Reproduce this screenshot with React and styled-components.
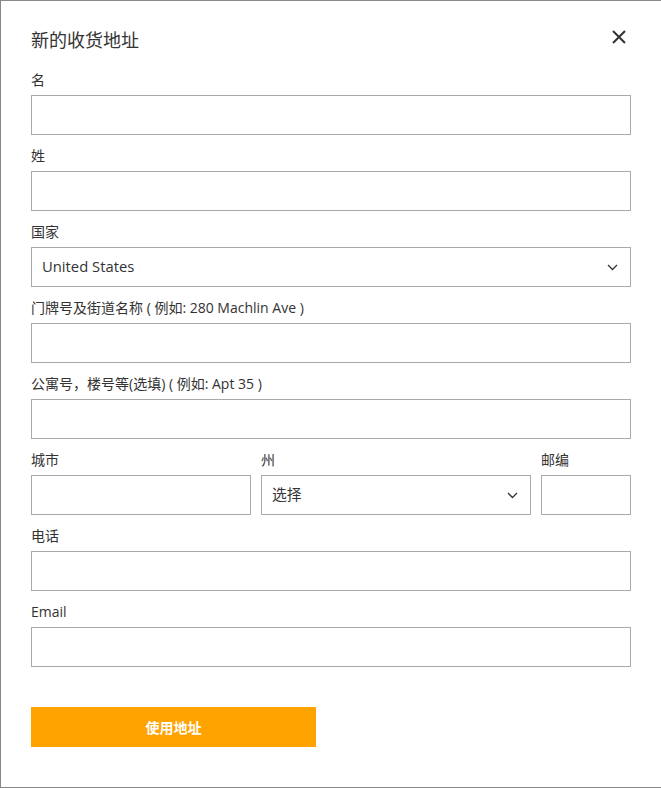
import styled, { createGlobalStyle } from "styled-components";

const GlobalStyle = createGlobalStyle`
  html, body {
    margin: 0;
    padding: 0;
    background: #fff;
  }
  body {
    font-family: "Open Sans", "Noto Sans CJK SC", sans-serif;
    color: #333;
  }
  * { box-sizing: border-box; }
`;

const Modal = styled.div`
  width: 661px;
  height: 788px;
  border: 1px solid #888;
  border-right: none;
  background: #fff;
  padding: 25px 30px 0 30px;
`;

const Header = styled.div`
  display: flex;
  align-items: flex-start;
  justify-content: space-between;
  height: 26px;
  margin-bottom: 18px;
`;

const Title = styled.h2`
  margin: 0;
  font-size: 18px;
  font-weight: 400;
  line-height: 26px;
  color: #333;
  font-family: "Noto Sans CJK SC", sans-serif;
`;

const CloseButton = styled.button`
  border: none;
  background: none;
  padding: 0;
  width: 14px;
  height: 14px;
  margin: 4px 5px 0 0;
  display: flex;
  cursor: pointer;
`;

const Field = styled.div`
  display: flex;
  flex-direction: column;
  margin-bottom: 11px;
  width: ${(p) => (p.$width ? `${p.$width}px` : "100%")};
`;

const Label = styled.label`
  font-size: 14px;
  line-height: 20px;
  height: 20px;
  margin-bottom: 5px;
  color: #333;
  white-space: nowrap;
`;

const Input = styled.input`
  height: 40px;
  width: 100%;
  border: 1px solid #aaa;
  background: #fff;
  padding: 0 10px;
  font-size: 14px;
  font-family: inherit;
  outline: none;
`;

const SelectBox = styled.div`
  height: 40px;
  width: 100%;
  border: 1px solid #aaa;
  background: #fff;
  padding: 0 12px 3px 10px;
  display: flex;
  align-items: center;
  justify-content: space-between;
  font-size: 14.8px;
  color: #333;

  svg {
    margin-top: 3px;
  }
`;

const Row = styled.div`
  display: flex;
  gap: 10px;
  width: 600px;
`;

const Form = styled.div`
  width: 600px;
`;

const SubmitButton = styled.button`
  margin-top: 29px;
  width: 285px;
  height: 40px;
  border: none;
  background: #ffa300;
  color: #fff;
  font-size: 14px;
  font-weight: 700;
  font-family: "Noto Sans CJK SC", sans-serif;
  cursor: pointer;
`;

const Chevron = () => (
  <svg width="11" height="7" viewBox="0 0 11 7" fill="none">
    <path d="M1 1l4.5 4.5L10 1" stroke="#333" strokeWidth="1.3" />
  </svg>
);

const TextField = ({ label, width }) => (
  <Field $width={width}>
    <Label>{label}</Label>
    <Input type="text" />
  </Field>
);

const SelectField = ({ label, value, width }) => (
  <Field $width={width}>
    <Label>{label}</Label>
    <SelectBox>
      <span>{value}</span>
      <Chevron />
    </SelectBox>
  </Field>
);

export default function App() {
  return (
    <>
      <GlobalStyle />
      <Modal>
        <Header>
          <Title>新的收货地址</Title>
          <CloseButton aria-label="close">
            <svg width="14" height="14" viewBox="0 0 14 14">
              <path d="M1 1l12 12M13 1L1 13" stroke="#333" strokeWidth="2" />
            </svg>
          </CloseButton>
        </Header>
        <Form>
          <TextField label="名" />
          <TextField label="姓" />
          <SelectField label="国家" value="United States" />
          <TextField label="门牌号及街道名称 ( 例如: 280 Machlin Ave )" />
          <TextField label="公寓号，楼号等(选填) ( 例如: Apt 35 )" />
          <Row>
            <TextField label="城市" width={220} />
            <SelectField label="州" value="选择" width={270} />
            <TextField label="邮编" width={90} />
          </Row>
          <TextField label="电话" />
          <TextField label="Email" />
          <SubmitButton>使用地址</SubmitButton>
        </Form>
      </Modal>
    </>
  );
}
